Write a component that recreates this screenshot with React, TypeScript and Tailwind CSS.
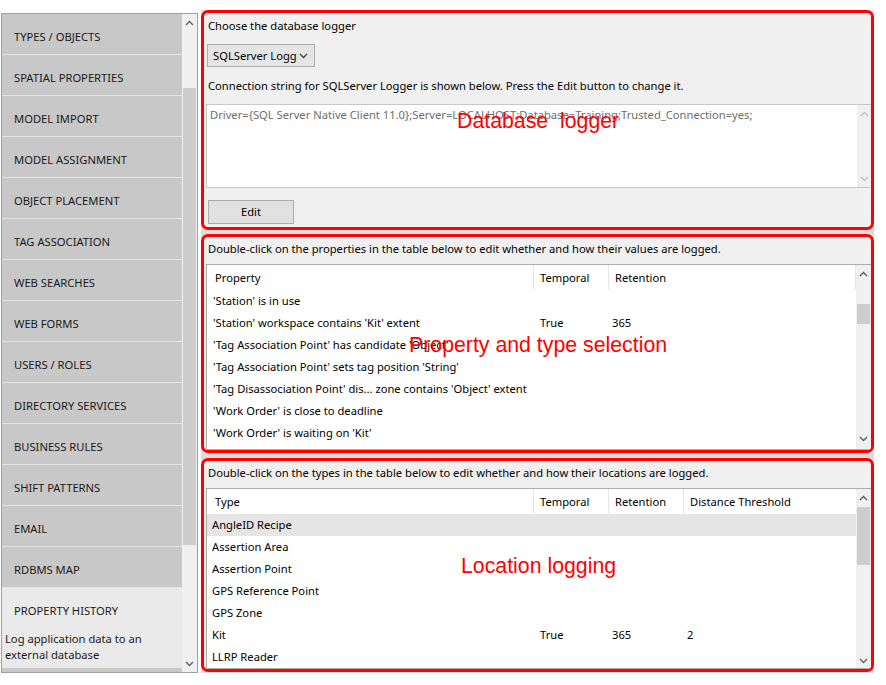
import React from "react";

const navItems = [
  "TYPES / OBJECTS",
  "SPATIAL PROPERTIES",
  "MODEL IMPORT",
  "MODEL ASSIGNMENT",
  "OBJECT PLACEMENT",
  "TAG ASSOCIATION",
  "WEB SEARCHES",
  "WEB FORMS",
  "USERS / ROLES",
  "DIRECTORY SERVICES",
  "BUSINESS RULES",
  "SHIFT PATTERNS",
  "EMAIL",
  "RDBMS MAP",
];

const propertyRows = [
  { name: "'Station' is in use", temporal: "", retention: "" },
  { name: "'Station' workspace contains 'Kit' extent", temporal: "True", retention: "365" },
  { name: "'Tag Association Point' has candidate 'Object'", temporal: "", retention: "" },
  { name: "'Tag Association Point' sets tag position 'String'", temporal: "", retention: "" },
  { name: "'Tag Disassociation Point' dis... zone contains 'Object' extent", temporal: "", retention: "" },
  { name: "'Work Order' is close to deadline", temporal: "", retention: "" },
  { name: "'Work Order' is waiting on 'Kit'", temporal: "", retention: "" },
];

const typeRows = [
  { name: "AngleID Recipe", temporal: "", retention: "", distance: "", selected: true },
  { name: "Assertion Area", temporal: "", retention: "", distance: "" },
  { name: "Assertion Point", temporal: "", retention: "", distance: "" },
  { name: "GPS Reference Point", temporal: "", retention: "", distance: "" },
  { name: "GPS Zone", temporal: "", retention: "", distance: "" },
  { name: "Kit", temporal: "True", retention: "365", distance: "2" },
  { name: "LLRP Reader", temporal: "", retention: "", distance: "" },
];

function Chevron({ dir, color }: { dir: "up" | "down"; color: string }) {
  return (
    <svg width="9" height="6" viewBox="0 0 9 6">
      <path
        d={dir === "up" ? "M1 5 L4.5 1.5 L8 5" : "M1 1 L4.5 4.5 L8 1"}
        stroke={color}
        strokeWidth="1.4"
        fill="none"
      />
    </svg>
  );
}

function Scrollbar({
  width,
  thumb,
  arrowColor,
  upH,
  downH,
}: {
  width: string;
  thumb?: string;
  arrowColor: string;
  upH: string;
  downH: string;
}) {
  return (
    <div className={`${width} shrink-0 flex flex-col bg-[#f0f0f0]`}>
      <div className={`${upH} flex items-center justify-center`}>
        <Chevron dir="up" color={arrowColor} />
      </div>
      <div className="flex-1 px-[1px]">
        {thumb && <div className={`${thumb} bg-[#cdcdcd]`} />}
      </div>
      <div className={`${downH} flex items-center justify-center`}>
        <Chevron dir="down" color={arrowColor} />
      </div>
    </div>
  );
}

function Sidebar() {
  return (
    <div className="mt-[13px] ml-[1px] w-[197px] h-[660px] border border-[#a0a0a0] flex overflow-hidden">
      <div className="w-[180px] flex flex-col">
        {navItems.map((item) => (
          <div
            key={item}
            className="h-[41px] shrink-0 bg-[#c8c8c8] border-b border-[#e4e4e4] flex items-center pt-[6px] pl-[12px] text-[#1a1a1a] leading-[16px]"
          >
            {item}
          </div>
        ))}
        <div className="flex-1 bg-[#eaeaea] flex flex-col">
          <div className="h-[40px] shrink-0 flex items-center pt-[6px] pl-[12px] text-[#1a1a1a] leading-[16px]">
            PROPERTY HISTORY
          </div>
          <div className="mt-[3px] pl-[3px] leading-[16px] text-[#1a1a1a]">
            Log application data to an
            <br />
            external database
          </div>
          <div className="mt-auto h-[4px] bg-[#c8c8c8]" />
        </div>
      </div>
      <Scrollbar
        width="w-[15px]"
        thumb="mt-[57px] h-[457px]"
        arrowColor="#606060"
        upH="h-[17px]"
        downH="h-[16px]"
      />
    </div>
  );
}

function RedBox({ className, children }: { className: string; children: React.ReactNode }) {
  return (
    <div
      className={`${className} w-[673px] border-[3px] border-[#ff0000] rounded-[7px] bg-[#f0f0f0] overflow-hidden flex flex-col`}
    >
      {children}
    </div>
  );
}

function HeaderCell({ label, first }: { label: string; first?: boolean }) {
  return (
    <div
      className={`flex items-center pt-[1px] ${first ? "pl-[8px]" : "pl-[6px] border-l border-[#e5e5e5]"}`}
    >
      {label}
    </div>
  );
}

function PropertyTable() {
  return (
    <div className="mt-[7px] ml-[2px] mr-[-1px] h-[190px] border border-[#adadad] bg-white flex">
      <div className="w-[649px] flex flex-col">
        <div className="h-[25px] shrink-0 grid grid-cols-[326px_75px_75px_1fr] border-r border-[#e5e5e5]">
          <HeaderCell label="Property" first />
          <HeaderCell label="Temporal" />
          <HeaderCell label="Retention" />
          <div />
        </div>
        {propertyRows.map((row) => (
          <div key={row.name} className="h-[22px] shrink-0 grid grid-cols-[326px_75px_75px_1fr] items-center">
            <div className="pl-[6px] whitespace-nowrap">{row.name}</div>
            <div className="pl-[7px]">{row.temporal}</div>
            <div className="pl-[4px]">{row.retention}</div>
            <div />
          </div>
        ))}
      </div>
      <Scrollbar
        width="w-[15px]"
        thumb="mt-[22px] h-[20px]"
        arrowColor="#606060"
        upH="h-[17px]"
        downH="h-[20px]"
      />
    </div>
  );
}

function TypeTable() {
  return (
    <div className="mt-[7px] ml-[2px] mr-[-1px] h-[184px] border border-[#adadad] bg-white flex">
      <div className="w-[649px] flex flex-col">
        <div className="h-[25px] shrink-0 grid grid-cols-[326px_75px_75px_1fr]">
          <HeaderCell label="Type" first />
          <HeaderCell label="Temporal" />
          <HeaderCell label="Retention" />
          <HeaderCell label="Distance Threshold" />
        </div>
        {typeRows.map((row) => (
          <div
            key={row.name}
            className={`h-[22px] shrink-0 grid grid-cols-[326px_75px_75px_1fr] items-center ${row.selected ? "bg-[#e5e5e5]" : ""}`}
          >
            <div className="pl-[5px]">{row.name}</div>
            <div className="pl-[7px]">{row.temporal}</div>
            <div className="pl-[4px]">{row.retention}</div>
            <div className="pl-[4px]">{row.distance}</div>
          </div>
        ))}
      </div>
      <Scrollbar
        width="w-[15px]"
        thumb="mt-[1px] h-[58px]"
        arrowColor="#606060"
        upH="h-[17px]"
        downH="h-[14px]"
      />
    </div>
  );
}

export default function App() {
  return (
    <div className="relative w-[886px] h-[685px] bg-white overflow-hidden text-[11.2px] text-black font-['Segoe_UI','Noto_Sans',sans-serif]">
      <div className="flex">
        <Sidebar />

        {/* right column */}
        <div className="ml-[3px] mt-[10px] flex flex-col bg-[#dcdcdc]">
          <RedBox className="h-[220px]">
            <div className="pt-[5px] pl-[4px] leading-[16px]">Choose the database logger</div>
            <div className="mt-[10px] ml-[3px] w-[108px] h-[23px] shrink-0 bg-[#e5e5e5] border border-[#adadad] flex items-center pl-[5px] pr-[6px]">
              <span className="leading-[16px] pt-[1px]">SQLServer Logg</span>
              <span className="ml-auto">
                <Chevron dir="down" color="#444" />
              </span>
            </div>
            <div className="mt-[11px] pl-[4px] leading-[16px]">
              Connection string for SQLServer Logger is shown below. Press the Edit button to change it.
            </div>
            <div className="mt-[10px] ml-[2px] mr-[-1px] h-[84px] shrink-0 bg-white border border-[#c8c8c8] flex">
              <div className="flex-1 pl-[3px] pt-[2px] leading-[16px] text-[#6d6d6d]">
                Driver={"{SQL Server Native Client 11.0}"};Server=LOCALHOST;Database=Training;Trusted_Connection=yes;
              </div>
              <Scrollbar width="w-[14px]" arrowColor="#c2c2c2" upH="h-[17px]" downH="h-[17px]" />
            </div>
            <div className="mt-[12px] ml-[4px] w-[86px] h-[24px] shrink-0 bg-[#e1e1e1] border border-[#adadad] flex items-center justify-center">
              Edit
            </div>
          </RedBox>

          <RedBox className="mt-[4px] h-[219px]">
            <div className="pt-[4px] pl-[4px] leading-[16px]">
              Double-click on the properties in the table below to edit whether and how their values are logged.
            </div>
            <PropertyTable />
          </RedBox>

          <RedBox className="mt-[5px] h-[214px]">
            <div className="pt-[4px] pl-[4px] leading-[16px]">
              Double-click on the types in the table below to edit whether and how their locations are logged.
            </div>
            <TypeTable />
          </RedBox>
        </div>
      </div>

      {/* annotations drawn over the screenshot */}
      <div className="absolute left-[457px] top-[109px] text-[21.3px] leading-[24px] text-[#ff0000] font-['Liberation_Sans',Arial,sans-serif] whitespace-pre">
        Database  logger
      </div>
      <div className="absolute left-[409px] top-[333px] text-[21.3px] leading-[24px] text-[#ff0000] font-['Liberation_Sans',Arial,sans-serif] whitespace-pre">
        Property and type selection
      </div>
      <div className="absolute left-[461px] top-[554px] text-[21.3px] leading-[24px] text-[#ff0000] font-['Liberation_Sans',Arial,sans-serif] whitespace-pre">
        Location logging
      </div>
    </div>
  );
}
